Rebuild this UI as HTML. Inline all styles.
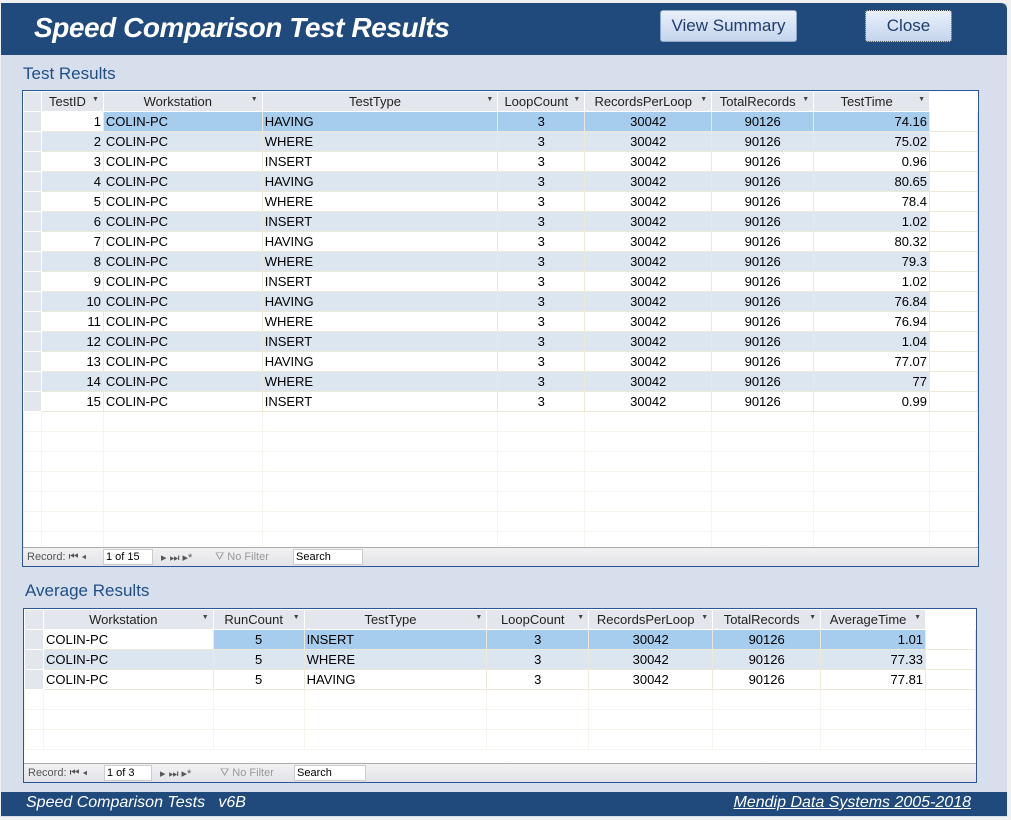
<!DOCTYPE html>
<html><head><meta charset="utf-8"><style>
*{margin:0;padding:0;box-sizing:border-box}
body{width:1011px;height:820px;background:#f0f0f0;font-family:"Liberation Sans",sans-serif;position:relative;overflow:hidden}
.form{position:absolute;left:1px;top:3px;width:1006px;height:814px;background:#d6dfeb}
.hdr{position:absolute;left:1px;top:3px;width:1006px;height:52px;background:#204a7c;border-top-right-radius:6px}
.title{position:absolute;left:34px;top:12px;color:#fff;font-size:28px;font-weight:bold;font-style:italic;letter-spacing:-0.45px}
.btn{position:absolute;top:10px;height:32px;border:1px solid #8ea6c8;border-radius:3px;background:linear-gradient(#e9f0fa,#c4d5ee);color:#1f3e6e;font-size:17px;text-align:center;line-height:30px}
.lbl{position:absolute;color:#1f4e85;font-size:17px}
.grid{position:absolute;background:#fff;border:1px solid #2b5797;overflow:hidden}
table{border-collapse:collapse;table-layout:fixed;position:absolute;left:0;top:0}
td{height:20px;font-size:13px;padding:0 2px;border:1px solid #ece9d8;white-space:nowrap;overflow:hidden;color:#000}
th{height:20px;font-size:13px;font-weight:normal;background:#e3e6ec;border:1px solid #fff;color:#222;position:relative;padding-right:10px}
th span.a{position:absolute;right:4px;top:4px;font-size:7px;color:#444}
td.s{background:#e3e6ec;border-color:#fff}
.r{text-align:right}.c{text-align:center}
tr.alt td{background:#dce6f1}
tr.sel td{background:#a6cdee}
tr.alt td.s,tr.sel td.s{background:#e3e6ec}
tr.e td{background:#fff;border-color:#f6f4ec}
tr.e td.s{background:#fff}
.nav{position:absolute;left:0;height:19px;background:linear-gradient(#f2f2f4,#e2e3e7);border-top:1px solid #aaa;font-size:11px;color:#555;width:100%}
.nav span{position:absolute;top:3px}
.nav .box{background:#fff;border:1px solid #ccc;top:1px;height:16px;padding-left:2px;color:#000;line-height:14px}
.ftr{position:absolute;left:1px;top:792px;width:1006px;height:24px;background:#204a7c;color:#fff;font-style:italic;font-size:16px}
</style></head><body>
<div class="form"></div>
<div class="hdr"></div>
<div class="title">Speed Comparison Test Results</div>
<div class="btn" style="left:660px;width:137px">View Summary</div>
<div class="btn" style="left:865px;width:87px;border:1px dotted #333">Close</div>
<div class="lbl" style="left:23px;top:64px">Test Results</div>

<div class="grid" style="left:22px;top:90px;width:957px;height:477px">
<table>
<colgroup><col style="width:18px"><col style="width:62px"><col style="width:159px"><col style="width:236px"><col style="width:87px"><col style="width:127px"><col style="width:102px"><col style="width:116px"><col style="width:48px"></colgroup>
<tr><th></th><th>TestID<span class="a">▼</span></th><th>Workstation<span class="a">▼</span></th><th>TestType<span class="a">▼</span></th><th>LoopCount<span class="a">▼</span></th><th>RecordsPerLoop<span class="a">▼</span></th><th>TotalRecords<span class="a">▼</span></th><th>TestTime<span class="a">▼</span></th><th style="background:#fff"></th></tr>
<tr class="sel"><td class="s"></td><td class="r" style="background:#fff">1</td><td>COLIN-PC</td><td>HAVING</td><td class="c">3</td><td class="c">30042</td><td class="c">90126</td><td class="r">74.16</td><td style="background:#fff"></td></tr>
<tr class="alt"><td class="s"></td><td class="r">2</td><td>COLIN-PC</td><td>WHERE</td><td class="c">3</td><td class="c">30042</td><td class="c">90126</td><td class="r">75.02</td><td style="background:#fff"></td></tr>
<tr><td class="s"></td><td class="r">3</td><td>COLIN-PC</td><td>INSERT</td><td class="c">3</td><td class="c">30042</td><td class="c">90126</td><td class="r">0.96</td><td></td></tr>
<tr class="alt"><td class="s"></td><td class="r">4</td><td>COLIN-PC</td><td>HAVING</td><td class="c">3</td><td class="c">30042</td><td class="c">90126</td><td class="r">80.65</td><td style="background:#fff"></td></tr>
<tr><td class="s"></td><td class="r">5</td><td>COLIN-PC</td><td>WHERE</td><td class="c">3</td><td class="c">30042</td><td class="c">90126</td><td class="r">78.4</td><td></td></tr>
<tr class="alt"><td class="s"></td><td class="r">6</td><td>COLIN-PC</td><td>INSERT</td><td class="c">3</td><td class="c">30042</td><td class="c">90126</td><td class="r">1.02</td><td style="background:#fff"></td></tr>
<tr><td class="s"></td><td class="r">7</td><td>COLIN-PC</td><td>HAVING</td><td class="c">3</td><td class="c">30042</td><td class="c">90126</td><td class="r">80.32</td><td></td></tr>
<tr class="alt"><td class="s"></td><td class="r">8</td><td>COLIN-PC</td><td>WHERE</td><td class="c">3</td><td class="c">30042</td><td class="c">90126</td><td class="r">79.3</td><td style="background:#fff"></td></tr>
<tr><td class="s"></td><td class="r">9</td><td>COLIN-PC</td><td>INSERT</td><td class="c">3</td><td class="c">30042</td><td class="c">90126</td><td class="r">1.02</td><td></td></tr>
<tr class="alt"><td class="s"></td><td class="r">10</td><td>COLIN-PC</td><td>HAVING</td><td class="c">3</td><td class="c">30042</td><td class="c">90126</td><td class="r">76.84</td><td style="background:#fff"></td></tr>
<tr><td class="s"></td><td class="r">11</td><td>COLIN-PC</td><td>WHERE</td><td class="c">3</td><td class="c">30042</td><td class="c">90126</td><td class="r">76.94</td><td></td></tr>
<tr class="alt"><td class="s"></td><td class="r">12</td><td>COLIN-PC</td><td>INSERT</td><td class="c">3</td><td class="c">30042</td><td class="c">90126</td><td class="r">1.04</td><td style="background:#fff"></td></tr>
<tr><td class="s"></td><td class="r">13</td><td>COLIN-PC</td><td>HAVING</td><td class="c">3</td><td class="c">30042</td><td class="c">90126</td><td class="r">77.07</td><td></td></tr>
<tr class="alt"><td class="s"></td><td class="r">14</td><td>COLIN-PC</td><td>WHERE</td><td class="c">3</td><td class="c">30042</td><td class="c">90126</td><td class="r">77</td><td style="background:#fff"></td></tr>
<tr><td class="s"></td><td class="r">15</td><td>COLIN-PC</td><td>INSERT</td><td class="c">3</td><td class="c">30042</td><td class="c">90126</td><td class="r">0.99</td><td></td></tr>
<tr class="e"><td class="s"></td><td></td><td></td><td></td><td></td><td></td><td></td><td></td><td></td></tr>
<tr class="e"><td class="s"></td><td></td><td></td><td></td><td></td><td></td><td></td><td></td><td></td></tr>
<tr class="e"><td class="s"></td><td></td><td></td><td></td><td></td><td></td><td></td><td></td><td></td></tr>
<tr class="e"><td class="s"></td><td></td><td></td><td></td><td></td><td></td><td></td><td></td><td></td></tr>
<tr class="e"><td class="s"></td><td></td><td></td><td></td><td></td><td></td><td></td><td></td><td></td></tr>
<tr class="e"><td class="s"></td><td></td><td></td><td></td><td></td><td></td><td></td><td></td><td></td></tr>
<tr class="e"><td class="s"></td><td></td><td></td><td></td><td></td><td></td><td></td><td></td><td></td></tr>
</table>
<div class="nav" style="top:456px">
<span style="left:4px">Record: ⏮ ◂</span><span class="box" style="left:80px;width:50px">1 of 15</span><span style="left:138px">▸ ⏭ ▸*</span><span style="left:192px;color:#999">⛛ No Filter</span><span class="box" style="left:270px;width:70px">Search</span>
</div>
</div>

<div class="lbl" style="left:25px;top:581px">Average Results</div>
<div class="grid" style="left:23px;top:608px;width:954px;height:175px">
<table>
<colgroup><col style="width:19px"><col style="width:170px"><col style="width:91px"><col style="width:183px"><col style="width:102px"><col style="width:124px"><col style="width:108px"><col style="width:105px"><col style="width:50px"></colgroup>
<tr><th></th><th>Workstation<span class="a">▼</span></th><th>RunCount<span class="a">▼</span></th><th>TestType<span class="a">▼</span></th><th>LoopCount<span class="a">▼</span></th><th>RecordsPerLoop<span class="a">▼</span></th><th>TotalRecords<span class="a">▼</span></th><th>AverageTime<span class="a">▼</span></th><th style="background:#fff"></th></tr>
<tr class="sel"><td class="s"></td><td style="background:#fff">COLIN-PC</td><td class="c">5</td><td>INSERT</td><td class="c">3</td><td class="c">30042</td><td class="c">90126</td><td class="r">1.01</td><td style="background:#fff"></td></tr>
<tr class="alt"><td class="s"></td><td>COLIN-PC</td><td class="c">5</td><td>WHERE</td><td class="c">3</td><td class="c">30042</td><td class="c">90126</td><td class="r">77.33</td><td style="background:#fff"></td></tr>
<tr><td class="s"></td><td>COLIN-PC</td><td class="c">5</td><td>HAVING</td><td class="c">3</td><td class="c">30042</td><td class="c">90126</td><td class="r">77.81</td><td></td></tr>
<tr class="e"><td class="s"></td><td></td><td></td><td></td><td></td><td></td><td></td><td></td><td></td></tr>
<tr class="e"><td class="s"></td><td></td><td></td><td></td><td></td><td></td><td></td><td></td><td></td></tr>
<tr class="e"><td class="s"></td><td></td><td></td><td></td><td></td><td></td><td></td><td></td><td></td></tr>
</table>
<div class="nav" style="top:154px">
<span style="left:4px">Record: ⏮ ◂</span><span class="box" style="left:80px;width:48px">1 of 3</span><span style="left:136px">▸ ⏭ ▸*</span><span style="left:196px;color:#999">⛛ No Filter</span><span class="box" style="left:270px;width:72px">Search</span>
</div>
</div>

<div class="ftr"><span style="position:absolute;left:25px;top:2px">Speed Comparison Tests&nbsp;&nbsp; v6B</span><span style="position:absolute;right:36px;top:2px;text-decoration:underline">Mendip Data Systems 2005-2018</span></div>
</body></html>
